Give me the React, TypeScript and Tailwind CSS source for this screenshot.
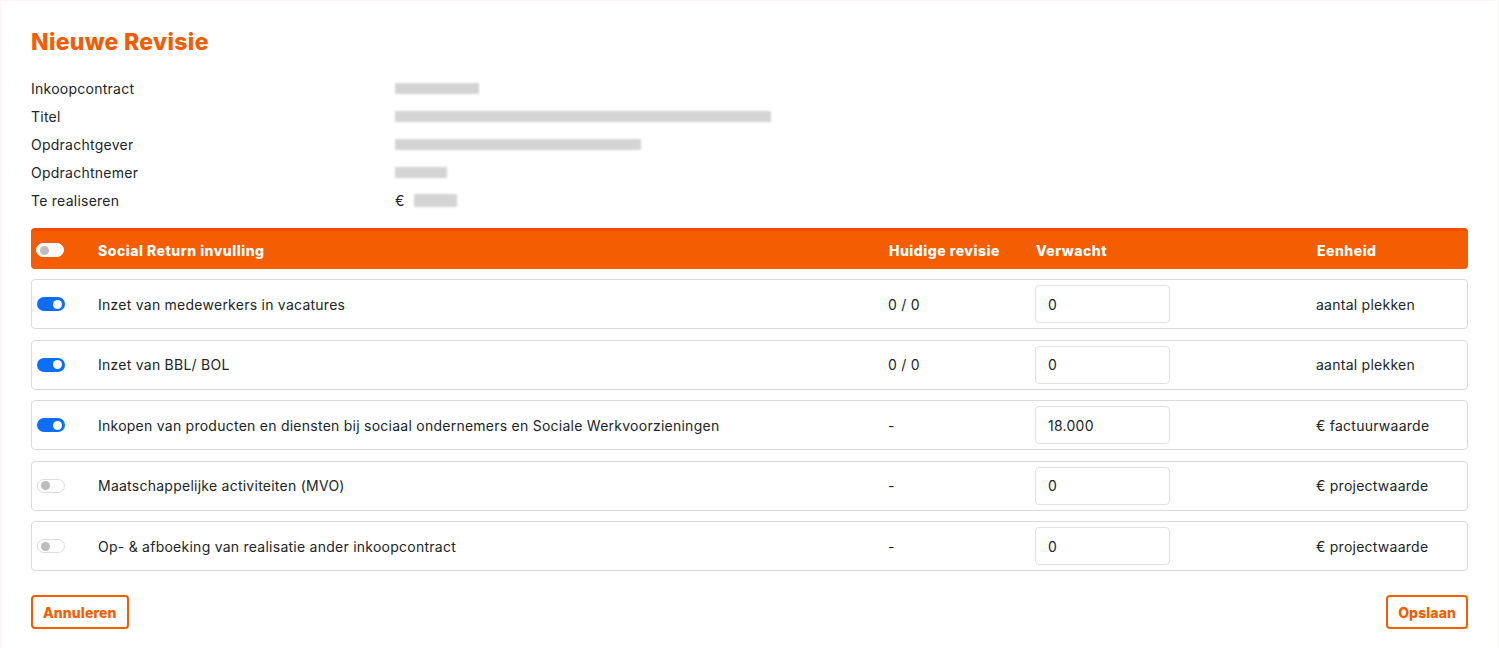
import React from 'react';

type Row = {
  label: string;
  current: string;
  expected: string;
  unit: string;
  active: boolean;
};

const INFO = [
  { label: 'Inkoopcontract', w: 'w-[84px]' },
  { label: 'Titel', w: 'w-[376px]' },
  { label: 'Opdrachtgever', w: 'w-[246px]' },
  { label: 'Opdrachtnemer', w: 'w-[52px]' },
];

const ROWS: Row[] = [
  { label: 'Inzet van medewerkers in vacatures', current: '0 / 0', expected: '0', unit: 'aantal plekken', active: true },
  { label: 'Inzet van BBL/ BOL', current: '0 / 0', expected: '0', unit: 'aantal plekken', active: true },
  {
    label: 'Inkopen van producten en diensten bij sociaal ondernemers en Sociale Werkvoorzieningen',
    current: '-',
    expected: '18.000',
    unit: '€ factuurwaarde',
    active: true,
  },
  { label: 'Maatschappelijke activiteiten (MVO)', current: '-', expected: '0', unit: '€ projectwaarde', active: false },
  { label: 'Op- & afboeking van realisatie ander inkoopcontract', current: '-', expected: '0', unit: '€ projectwaarde', active: false },
];

const Switch: React.FC<{ on: boolean; header?: boolean }> = ({ on, header }) => {
  if (on) {
    return (
      <span className="flex items-center justify-end w-[28px] h-[14px] rounded-full bg-[#0d6efd] pr-[3px]">
        <span className="w-[9px] h-[9px] rounded-full bg-white" />
      </span>
    );
  }
  return (
    <span
      className={`flex items-center w-[28px] h-[14px] rounded-full pl-[3px] border ${
        header ? 'bg-white border-white' : 'bg-white border-[#dedede]'
      }`}
    >
      <span className="w-[9px] h-[9px] rounded-full bg-[#bdbdbd]" />
    </span>
  );
};

const App: React.FC = () => {
  return (
    <div className="min-h-[648px] bg-[#fdf8f6] pl-[2px] pr-[2px] pt-[1px] font-['Inter',sans-serif] text-[#212529]">
      <div className="bg-white min-h-[647px] px-[29px] pt-[26px]">
        <h1 className="text-[23px] leading-[30px] font-extrabold tracking-[0.3px] text-[#f25c05]">Nieuwe Revisie</h1>

        {/* Contract info */}
        <div className="mt-[17px] flex flex-col text-[14px] tracking-[0.25px]">
          {INFO.map((item) => (
            <div key={item.label} className="flex items-center h-[28px]">
              <span className="w-[364px]">{item.label}</span>
              <span className={`h-[11px] ${item.w} bg-[#d4d4d4] blur-[1px]`} />
            </div>
          ))}
          <div className="flex items-center h-[28px]">
            <span className="w-[364px]">Te realiseren</span>
            <span>€</span>
            <span className="ml-[9px] h-[13px] w-[43px] bg-[#d4d4d4] blur-[1px]" />
          </div>
        </div>

        {/* Table header */}
        <div className="mt-[14px] flex items-center h-[41px] rounded-[4px] bg-[#f45d01] border-t-[3px] border-[#ef4c00] text-white text-[14px] tracking-[0.5px] font-extrabold">
          <div className="w-[67px] pl-[5px]">
            <Switch on={false} header />
          </div>
          <div className="flex-1">Social Return invulling</div>
          <div className="w-[147px]">Huidige revisie</div>
          <div className="w-[281px]">Verwacht</div>
          <div className="w-[151px]">Eenheid</div>
        </div>

        {/* Rows */}
        <div className="mt-[10px] flex flex-col gap-[10.5px]">
          {ROWS.map((row) => (
            <div
              key={row.label}
              className="flex items-center h-[50px] rounded-[4px] border border-[#dcdad8] bg-white text-[14px] tracking-[0.25px]"
            >
              <div className="w-[66px] pl-[5px]">
                <Switch on={row.active} />
              </div>
              <div className="flex-1">{row.label}</div>
              <div className="w-[147px]">{row.current}</div>
              <div className="w-[281px]">
                <input
                  readOnly
                  value={row.expected}
                  className="w-[135px] h-[38px] rounded-[4px] border border-[#dee2e6] px-[12px] text-[14px] tracking-[0.25px] outline-none"
                />
              </div>
              <div className="w-[151px]">{row.unit}</div>
            </div>
          ))}
        </div>

        {/* Actions */}
        <div className="mt-[24px] flex justify-between">
          <button className="h-[34px] px-[10px] rounded-[4px] border-2 border-[#f45d01] text-[#f45d01] text-[14px] tracking-[0.1px] font-extrabold">
            Annuleren
          </button>
          <button className="h-[34px] px-[10px] rounded-[4px] border-2 border-[#f45d01] text-[#f45d01] text-[14px] tracking-[0.1px] font-extrabold">
            Opslaan
          </button>
        </div>
      </div>
    </div>
  );
};

export default App;
